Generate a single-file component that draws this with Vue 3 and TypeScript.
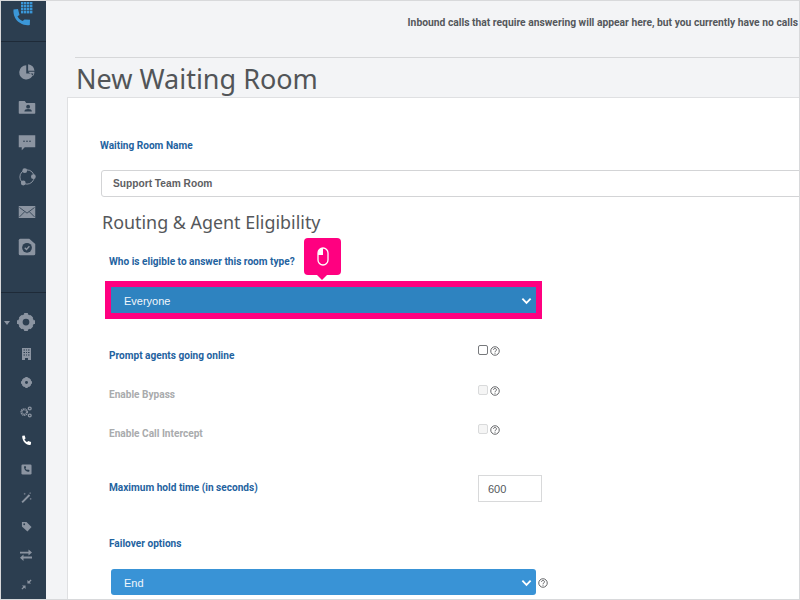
<script setup lang="ts">
const topIcons = [
  { id: 'pie', paths: ['M11 3a9.5 9.5 0 1 0 9.5 11H11z', 'M13.5 1.5a9.5 9.5 0 0 1 8.5 8.8h-8.5z', 'M13.5 11.8 22 11.8a9.6 9.6 0 0 1-1.6 5.2z'] },
  { id: 'folder', paths: ['M2 4h7l2 2.5h11a1 1 0 0 1 1 1V20a1 1 0 0 1-1 1H2a1 1 0 0 1-1-1V5a1 1 0 0 1 1-1z'] },
  { id: 'chat', paths: ['M1 3h22v16H9l-4 4v-4H1z'] },
  { id: 'mail', paths: ['M1 4h22v16H1z'] },
  { id: 'task', paths: ['M3 1h12l8 7v13a2 2 0 0 1-2 2H3a2 2 0 0 1-2-2V3a2 2 0 0 1 2-2z'] },
]

const formRows = [
  { label: 'Prompt agents going online', disabled: false },
  { label: 'Enable Bypass', disabled: true },
  { label: 'Enable Call Intercept', disabled: true },
]
</script>

<template>
  <div class="frame">
    <aside class="sidebar">
      <div class="logo">
        <svg width="24" height="26" viewBox="0 0 24 26">
          <g fill="#3b97d8">
            <rect v-for="n in 16" :key="n" :x="9 + ((n - 1) % 4) * 3" :y="1 + Math.floor((n - 1) / 4) * 3" width="2.4" height="2.4" />
          </g>
          <path d="M1.5 8.5 6 8l1.5 6-2 1.200c1.200 2.500 3 4 5.200 4.800l1.800-1.600 5.500.4-.2 5.200c-2 .6-6 .5-10-2.200C3.500 19.500 1 14 1.500 8.500z" fill="#3b97d8" />
        </svg>
      </div>
      <nav class="nav-top">
        <svg class="nav-icon" viewBox="0 0 24 24"><path :d="topIcons[0].paths.join(' ')" /></svg>
        <svg class="nav-icon" viewBox="0 0 24 24">
          <path :d="topIcons[1].paths[0]" />
          <circle cx="13.500" cy="11.500" r="2.600" fill="#2c3e50" />
          <path d="M8.500 18c0-2.500 2-3.500 5-3.500s5 1 5 3.500z" fill="#2c3e50" />
        </svg>
        <svg class="nav-icon" viewBox="0 0 24 24">
          <path :d="topIcons[2].paths[0]" />
          <g fill="#2c3e50"><circle cx="8" cy="11" r="1.100" /><circle cx="12" cy="11" r="1.100" /><circle cx="16" cy="11" r="1.100" /></g>
        </svg>
        <svg class="nav-icon" viewBox="0 0 24 24">
          <circle cx="12" cy="12" r="9.500" fill="none" stroke="#8b94a1" stroke-width="1.300" />
          <circle cx="9" cy="3.500" r="3.200" /><circle cx="20.500" cy="11.500" r="3.200" /><circle cx="7" cy="20" r="3.200" />
        </svg>
        <svg class="nav-icon" viewBox="0 0 24 24">
          <path :d="topIcons[3].paths[0]" />
          <path d="M2 6l10 7.500L22 6M2 18.500l7-7M22 18.500l-7-7" fill="none" stroke="#2c3e50" stroke-width="1.100" />
        </svg>
        <svg class="nav-icon" viewBox="0 0 24 24">
          <path :d="topIcons[4].paths[0]" />
          <circle cx="12" cy="13" r="6.500" fill="#2c3e50" />
          <path d="M9 13l2.300 2.300L15.200 11" fill="none" stroke="#8b94a1" stroke-width="1.800" />
        </svg>
      </nav>
      <nav class="nav-bottom">
        <div class="settings">
          <span class="caret"></span>
          <svg class="settings-gear" viewBox="0 0 24 24">
            <circle cx="12" cy="12" r="7.500" fill="none" stroke="#8b94a1" stroke-width="6" />
            <path d="M9.500 0h5v4h-5zM9.500 20h5v4h-5zM0 9.500h4v5H0zM20 9.500h4v5h-4zM2.500 6 6 2.500l3 3L5.500 9zM15 18.500l3.500-3.500 3 3L18 21.500zM18 2.500 21.500 6l-3 3L15 5.500zM5.500 15 9 18.500l-3 3L2.500 18z" />
          </svg>
        </div>
        <svg class="sub-icon building" viewBox="0 0 18 24" preserveAspectRatio="none">
          <path d="M0 0h18v24h-6v-4H6v4H0z" />
          <path d="M3 4h3M8 4h2M12 4h3M3 9h3M8 9h2M12 9h3M3 14h3M8 14h2M12 14h3" stroke="#2c3e50" stroke-width="2" />
        </svg>
        <svg class="sub-icon" viewBox="0 0 24 24">
          <circle cx="12" cy="12" r="7" fill="none" stroke="#8b94a1" stroke-width="7.500" />
          <path d="M9.500 0h5v4h-5zM9.500 20h5v4h-5zM0 9.500h4v5H0zM20 9.500h4v5h-4zM2.500 6 6 2.500l3 3L5.500 9zM15 18.500l3.500-3.500 3 3L18 21.500zM18 2.500 21.500 6l-3 3L15 5.500zM5.500 15 9 18.500l-3 3L2.500 18z" />
        </svg>
        <svg class="sub-icon gears" viewBox="0 0 24 24">
          <circle cx="8.500" cy="12" r="5.500" fill="none" stroke="#8b94a1" stroke-width="4.500" stroke-dasharray="2.200 1" />
          <circle cx="19.500" cy="5" r="2.800" fill="none" stroke="#8b94a1" stroke-width="2.600" />
          <circle cx="19.500" cy="19" r="2.800" fill="none" stroke="#8b94a1" stroke-width="2.600" />
        </svg>
        <svg class="sub-icon phone" viewBox="0 0 24 24">
          <path d="M3 1.500 8 1l2 6.500-2.500 1.500c1.300 3 3.300 5 6 6.300l2-2.300 6.500 2-.5 5.500c-3 2-7.500 1.500-12-2.500S1.500 6 3 1.500z" />
        </svg>
        <svg class="sub-icon" viewBox="0 0 24 24">
          <rect x="1" y="1" width="22" height="22" rx="3" />
          <path d="M7 5l3-.5 1.200 4-1.700 1c.8 1.800 2 3 3.800 3.800l1.200-1.500 4 1.300-.4 3.400c-2 1.200-5 .8-7.800-1.700S5.800 8 7 5z" fill="#2c3e50" />
        </svg>
        <svg class="sub-icon" viewBox="0 0 24 24">
          <path d="M1 21 17 5l3 3L4 24z" />
          <path d="M8 2v4M6 4h4M21 13v4M19 15h4M20 1v3M18.500 2.500h3" stroke="#8b94a1" stroke-width="1.200" />
        </svg>
        <svg class="sub-icon" viewBox="0 0 24 24">
          <path d="M2 2h10l11 11-9 10L2 12z" />
          <circle cx="7" cy="7" r="2" fill="#2c3e50" />
        </svg>
        <svg class="sub-icon arrows" viewBox="0 0 24 24">
          <path d="M0 5.500h17V1l7 6-7 6V9H0zM24 15H7v-4l-7 6.500L7 24v-5h17z" />
        </svg>
        <svg class="sub-icon" viewBox="0 0 24 24">
          <path d="M14 2v8h8l-3-3 4-4-2-2-4 4zM10 22v-8H2l3 3-4 4 2 2 4-4z" />
        </svg>
      </nav>
    </aside>

    <main class="content">
      <div class="top-bar">
        <p class="notice">Inbound calls that require answering will appear here, but you currently have no calls</p>
      </div>
      <h1 class="page-title">New Waiting Room</h1>

      <section class="card">
        <label class="field-label name-label">Waiting Room Name</label>
        <input class="name-input" type="text" value="Support Team Room" />

        <h2 class="section-title">Routing &amp; Agent Eligibility</h2>

        <label class="field-label who-label">Who is eligible to answer this room type?</label>

        <div class="highlight">
          <div class="select select-dark">
            <span>Everyone</span>
            <svg class="chevron" viewBox="0 0 12 8"><path d="M1.500 1.500 6 6l4.500-4.500" /></svg>
          </div>
          <div class="hint">
            <svg width="12" height="19" viewBox="0 0 12 19">
              <rect x="1" y="1" width="10" height="17" rx="5" fill="none" stroke="#fff" stroke-width="1.300" />
              <path d="M6 1a5 5 0 0 0-5 5v2h5z" fill="#fff" />
            </svg>
          </div>
        </div>

        <div v-for="row in formRows" :key="row.label" class="check-row">
          <label class="field-label" :class="{ muted: row.disabled }">{{ row.label }}</label>
          <div class="check-wrap" :class="{ lowered: row.disabled }">
            <span class="checkbox" :class="{ disabled: row.disabled }"></span>
            <svg class="help" viewBox="0 0 20 20">
              <circle cx="10" cy="10" r="8.500" />
              <path d="M7 7.800C7 5.800 8.500 5 10 5s3 1 3 2.700c0 2.300-3 2.300-3 4.500" />
              <path d="M10 13.500v2" />
            </svg>
          </div>
        </div>

        <div class="hold-row">
          <label class="field-label hold-label">Maximum hold time (in seconds)</label>
          <input class="hold-input" type="text" value="600" />
        </div>

        <label class="field-label failover-label">Failover options</label>
        <div class="failover-row">
          <div class="select select-light">
            <span>End</span>
            <svg class="chevron" viewBox="0 0 12 8"><path d="M1.500 1.500 6 6l4.500-4.500" /></svg>
          </div>
          <svg class="help" viewBox="0 0 20 20">
            <circle cx="10" cy="10" r="8.500" />
            <path d="M7 7.800C7 5.800 8.500 5 10 5s3 1 3 2.700c0 2.300-3 2.300-3 4.500" />
            <path d="M10 13.500v2" />
          </svg>
        </div>
      </section>
    </main>
  </div>
</template>

<style>
html,
body {
  margin: 0;
  background: #f3f4f6;
  overflow: hidden;
}
</style>

<style scoped>
.frame {
  box-sizing: border-box;
  width: 800px;
  height: 600px;
  display: flex;
  overflow: hidden;
  border: 1px solid #d8d9db;
  background: #f3f4f6;
  font-family: "Roboto", "Liberation Sans", sans-serif;
}

.sidebar {
  flex: 0 0 45px;
  background: #2c3e50;
  display: flex;
  flex-direction: column;
}

.logo {
  height: 41px;
  box-sizing: border-box;
  padding-left: 11px;
  border-bottom: 1px solid #1e2a38;
}

.logo svg {
  display: block;
}

.nav-top {
  height: 251px;
  box-sizing: border-box;
  padding: 20.500px 0 0 6px;
  display: flex;
  flex-direction: column;
  align-items: center;
  gap: 17px;
  border-bottom: 1px solid #1e2a38;
}

.nav-icon {
  width: 18px;
  height: 18px;
  fill: #8b94a1;
}

.nav-bottom {
  display: flex;
  flex-direction: column;
  align-items: center;
  gap: 17.500px;
  padding: 20px 0 0 5px;
}

.settings {
  position: relative;
  height: 18px;
  margin-bottom: -1px;
}

.caret {
  position: absolute;
  left: -13px;
  top: 8px;
  border: 3px solid transparent;
  border-top: 4px solid #8b94a1;
  border-bottom: 0;
}

.settings-gear {
  display: block;
  width: 18px;
  height: 18px;
  fill: #8b94a1;
}

.sub-icon {
  width: 11px;
  height: 11px;
  fill: #8b94a1;
}

.building {
  width: 9px;
  height: 12px;
}

.gears,
.arrows {
  width: 12px;
  height: 12px;
}

.phone {
  fill: #fff;
}

.content {
  flex: 1;
  min-width: 0;
}

.top-bar {
  margin-left: 29px;
  height: 56px;
  border-bottom: 1px solid #d6d7d9;
  display: flex;
  justify-content: flex-end;
}

.notice {
  margin: 15px 0 0;
  font-size: 10.300px;
  line-height: 14px;
  font-weight: 700;
  color: #55585c;
  white-space: nowrap;
  padding-right: 1px;
}

.page-title {
  margin: 0 0 0 30px;
  height: 39px;
  font-family: "Noto Sans", sans-serif;
  font-size: 27px;
  line-height: 42px;
  font-weight: 400;
  color: #525558;
  white-space: nowrap;
}

.card {
  margin-left: 21px;
  height: 502px;
  box-sizing: border-box;
  background: #fff;
  border-top: 1px solid #dfe0e2;
  border-left: 1px solid #dfe0e2;
  padding-top: 41px;
  display: flex;
  flex-direction: column;
  align-items: flex-start;
}

.field-label {
  display: block;
  font-size: 10.100px;
  line-height: 14px;
  font-weight: 700;
  color: #1f639f;
  white-space: nowrap;
}

.field-label.muted {
  color: #a9abad;
}

.name-label {
  margin-left: 32px;
}

.name-input {
  margin: 17px 0 0 33px;
  box-sizing: border-box;
  flex: none;
  width: 760px;
  height: 27px;
  padding: 0 11px;
  border: 1px solid #d3d4d6;
  border-radius: 3px;
  outline: none;
  background: #fff;
  font-family: "Liberation Sans", sans-serif;
  font-size: 10.200px;
  font-weight: 700;
  color: #5e6063;
}

.section-title {
  margin: 12px 0 0 34px;
  height: 26px;
  font-family: "Noto Sans", sans-serif;
  font-size: 17.900px;
  line-height: 26px;
  font-weight: 400;
  color: #55585b;
  white-space: nowrap;
}

.who-label {
  margin: 20px 0 0 41px;
}

.highlight {
  position: relative;
  margin: 12px 0 0 37px;
  box-sizing: border-box;
  width: 437px;
  height: 38px;
  border: 6px solid #ff0080;
  background: #fff;
}

.select {
  box-sizing: border-box;
  height: 26px;
  padding: 1px 4px 0 13px;
  display: flex;
  align-items: center;
  justify-content: space-between;
  font-family: "Liberation Sans", sans-serif;
  font-size: 11px;
  color: #f1f6fb;
}

.select-dark {
  background: #2e83c0;
}

.select-light {
  width: 425px;
  background: #3993d6;
  border-radius: 3px;
}

.chevron {
  width: 11px;
  height: 8px;
  fill: none;
  stroke: #fff;
  stroke-width: 2;
}

.hint {
  position: absolute;
  left: 193px;
  top: -49px;
  width: 37px;
  height: 37px;
  border-radius: 4px;
  background: #ff0080;
  display: flex;
  align-items: center;
  justify-content: center;
}

.hint::after {
  content: "";
  position: absolute;
  left: 13px;
  bottom: -5px;
  border: 5px solid transparent;
  border-top-color: #ff0080;
  border-bottom: 0;
}

.check-row {
  display: grid;
  grid-template-columns: 369px auto;
  margin-left: 41px;
  height: 20px;
  margin-bottom: 19px;
}

.highlight + .check-row {
  margin-top: 26px;
}

.check-row .field-label {
  margin-top: 4px;
}

.check-wrap {
  display: flex;
  align-items: flex-start;
  gap: 2px;
}

.check-wrap.lowered {
  margin-top: 1px;
}

.checkbox {
  box-sizing: border-box;
  width: 10px;
  height: 10px;
  border: 1px solid #77797c;
  border-radius: 2px;
  background: #fff;
}

.checkbox.disabled {
  border-color: #d9dadb;
  background: #f5f5f5;
}

.help {
  flex: none;
  width: 10px;
  height: 10px;
  margin-top: 1px;
  fill: none;
  stroke: #4a4c4f;
  stroke-width: 1.700;
}

.hold-row {
  display: grid;
  grid-template-columns: 369px auto;
  align-items: center;
  margin: 13px 0 0 41px;
  height: 27px;
}

.hold-label {
  padding-bottom: 2px;
}

.hold-input {
  box-sizing: border-box;
  width: 64px;
  height: 27px;
  padding: 0 9px;
  border: 1px solid #d8d9da;
  outline: none;
  font-family: "Liberation Sans", sans-serif;
  font-size: 11px;
  color: #55585b;
}

.failover-label {
  margin: 35px 0 0 41px;
}

.failover-row {
  display: flex;
  align-items: center;
  gap: 2px;
  margin: 18px 0 0 43px;
}
</style>
